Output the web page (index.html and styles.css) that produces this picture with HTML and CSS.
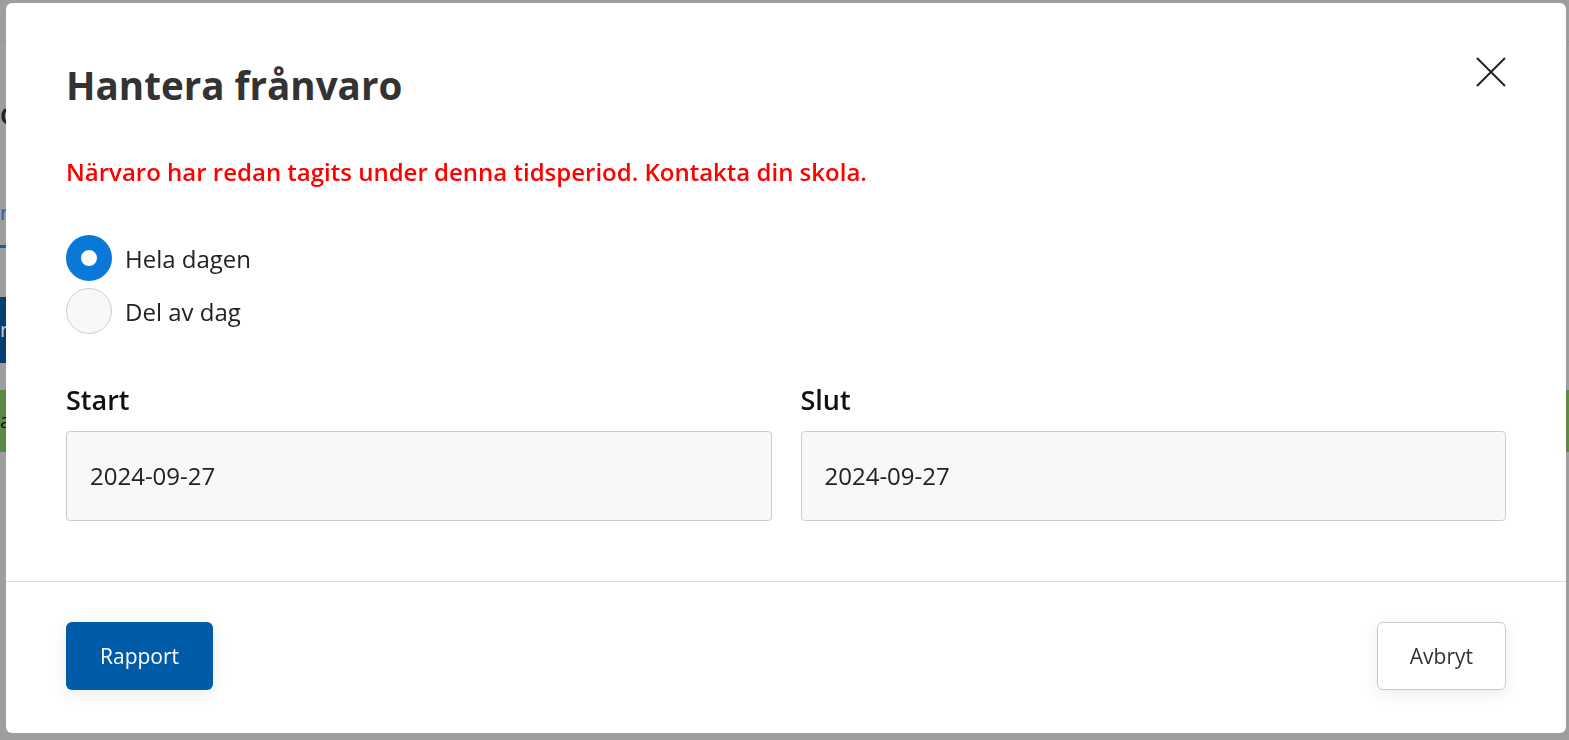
FILE: index.html
```html
<!DOCTYPE html>
<html lang="sv">
<head>
    <meta charset="UTF-8">
    <meta name="viewport" content="width=device-width, initial-scale=1.0">
    <title>Hantera frånvaro</title>
    <link rel="stylesheet" href="styles.css">
</head>
<body>
    <div class="page">
        <div class="topbar"></div>
        <div class="page-title">c</div>
        <div class="tabs"><span class="tab">r</span></div>
        <div class="bar-blue">r</div>
        <div class="bar-green">a</div>
    </div>

    <div class="modal">
        <div class="modal-body">
            <div class="modal-head">
                <h2 class="modal-title">Hantera frånvaro</h2>
                <button class="close" aria-label="Stäng">
                    <svg width="30" height="30" viewBox="0 0 30 30">
                        <path d="M1 1 L29 29 M29 1 L1 29" stroke="#222" stroke-width="2" fill="none"/>
                    </svg>
                </button>
            </div>

            <p class="error">Närvaro har redan tagits under denna tidsperiod. Kontakta din skola.</p>

            <div class="radios">
                <label class="radio">
                    <input type="radio" name="typ" checked>
                    <span class="dot"></span>
                    <span>Hela dagen</span>
                </label>
                <label class="radio">
                    <input type="radio" name="typ">
                    <span class="dot"></span>
                    <span>Del av dag</span>
                </label>
            </div>

            <div class="dates">
                <div class="field">
                    <div class="field-label">Start</div>
                    <div class="field-input">2024-09-27</div>
                </div>
                <div class="field">
                    <div class="field-label">Slut</div>
                    <div class="field-input">2024-09-27</div>
                </div>
            </div>
        </div>

        <div class="modal-foot">
            <button class="btn btn-primary">Rapport</button>
            <button class="btn btn-default">Avbryt</button>
        </div>
    </div>
</body>
</html>
```

FILE: styles.css
```css
body {
    margin: 0;
    background-color: #9e9e9e;
    font-family: "Open Sans", "Noto Sans", sans-serif;
    overflow: hidden;
}

/* sidan bakom dialogen */
.page {
    height: 740px;
}
.topbar {
    height: 41px;
    border-bottom: 1px solid #939393;
}
.page-title {
    margin-top: 52px;
    font-size: 28px;
    font-weight: 600;
    color: #222;
}
.tabs {
    margin-top: 67px;
    border-bottom: 3px solid #1b5d99;
    width: 200px;
    height: 46px;
}
.tab {
    font-size: 20px;
    color: #1c5e9c;
}
.bar-blue {
    margin-top: 49px;
    height: 66px;
    line-height: 66px;
    background-color: #063f6f;
    color: #ccc;
    font-size: 20px;
    width: 300px;
}
.bar-green {
    margin-top: 27px;
    height: 62px;
    line-height: 62px;
    background-color: #5b8a44;
    color: #111;
    font-size: 20px;
}

/* dialogen */
.modal {
    position: fixed;
    top: 3px;
    left: 6px;
    width: 1560px;
    height: 730px;
    background-color: #fff;
    border-radius: 6px;
    display: flex;
    flex-direction: column;
}
.modal-body {
    padding: 57px 60px 60px;
    border-bottom: 1px solid #dddddd;
}
.modal-head {
    display: flex;
    justify-content: space-between;
    align-items: flex-start;
}
.modal-title {
    margin: 0;
    font-size: 38.6px;
    line-height: 50px;
    font-weight: 700;
    color: #333;
}
.close {
    margin-top: -3px;
    margin-right: 0;
    padding: 0;
    border: none;
    background: none;
    width: 30px;
    height: 30px;
    cursor: pointer;
}
.error {
    margin: 46px 0 0;
    font-size: 24px;
    line-height: 32px;
    font-weight: 600;
    color: #ff0000;
}
.radios {
    margin-top: 47px;
    display: flex;
    flex-direction: column;
    gap: 7px;
}
.radio {
    display: flex;
    align-items: center;
    gap: 13px;
    font-size: 24px;
    color: #222;
    cursor: pointer;
}
.radio input {
    display: none;
}
.dot {
    width: 44px;
    height: 44px;
    border-radius: 50%;
    border: 1px solid #cccccc;
    background-color: #f8f8f8;
    box-sizing: content-box;
}
.radio input:checked + .dot {
    border-color: #0a78d8;
    background-color: #fff;
    width: 16px;
    height: 16px;
    border-width: 15px;
}
.dates {
    margin-top: 48px;
    display: flex;
    gap: 29px;
}
.field {
    flex: 1;
}
.field-label {
    font-size: 27px;
    line-height: 36px;
    font-weight: 600;
    color: #111;
}
.field-input {
    margin-top: 13px;
    height: 88px;
    line-height: 88px;
    padding: 0 23px;
    background-color: #f8f8f8;
    border: 1px solid #cccccc;
    border-radius: 4px;
    font-size: 24px;
    color: #222;
}
.modal-foot {
    padding: 40px 60px 0 60px;
    display: flex;
    justify-content: space-between;
}
.btn {
    height: 68px;
    padding: 0 33px;
    border-radius: 6px;
    font-family: inherit;
    font-size: 21px;
    cursor: pointer;
    box-shadow: 0 4px 16px rgba(0, 0, 0, 0.08);
}
.btn-primary {
    padding: 0 34px;
    background-color: #005ca9;
    color: #fff;
    border: none;
}
.btn-default {
    padding: 0 32px;
    background-color: #fff;
    color: #333;
    border: 1px solid #c8c8c8;
}
```
